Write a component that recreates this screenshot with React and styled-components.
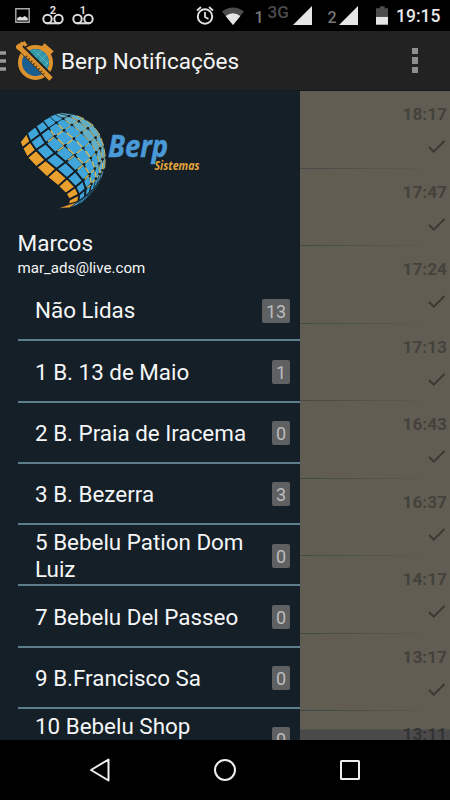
import React from 'react'
import styled, { createGlobalStyle } from 'styled-components'

const GlobalStyle = createGlobalStyle`
  * {
    box-sizing: border-box;
  }

  body {
    margin: 0;
    background: #000;
    font-family: Roboto, "Liberation Sans", sans-serif;
  }

  svg {
    display: block;
    flex-shrink: 0;
  }
`;

const Screen = styled.div`
  width: 450px;
  height: 800px;
  display: flex;
  flex-direction: column;
  overflow: hidden;
  background: #000;
`;

const StatusBar = styled.div`
  height: 31px;
  display: flex;
  align-items: center;
  justify-content: space-between;
  padding: 0 9px 0 15px;
`;

const StatusGroup = styled.div`
  display: flex;
  align-items: center;
  height: 31px;
`;

const StatusIcon = styled.svg`
  margin-right: ${props => props.$gap || 0}px;
`;

const Sim = styled.span`
  width: ${props => props.$width}px;
  padding-top: 4px;
  font-size: 16px;
  font-weight: 500;
  line-height: 18px;
  color: #777;
`;

const Network = styled.span`
  width: 25px;
  height: 24px;
  font-size: 17px;
  line-height: 17px;
  font-weight: 500;
  color: #4c4c4c;
`;

const Clock = styled.span`
  width: 45px;
  padding-top: 1px;
  font-size: 17.5px;
  font-weight: 500;
  color: #e8e8e8;
`;

const ActionBar = styled.div`
  height: 60px;
  display: flex;
  align-items: center;
  background: #222;
  border-bottom: 1px solid #17191b;
`;

const Title = styled.h1`
  flex: 1;
  margin: 1px 0 0 7px;
  font-size: 22.5px;
  font-weight: 400;
  color: #f5f5f5;
`;

const Overflow = styled.div`
  display: flex;
  flex-direction: column;
  gap: 3px;
  margin-right: 32px;
`;

const OverflowDot = styled.i`
  width: 6px;
  height: 6.5px;
  background: #8f8f8f;
`;

const Content = styled.div`
  height: 649px;
  display: flex;
  overflow: hidden;
`;

const Drawer = styled.div`
  width: 300px;
  height: 649px;
  overflow: hidden;
  background: #151f27;
`;

const Profile = styled.div`
  height: 189px;
  padding: 15px 0 0 17.5px;
  color: #f4f6f7;
`;

const LogoRow = styled.div`
  height: 124px;
`;

const Name = styled.div`
  font-size: 22.5px;
  line-height: 27px;
`;

const Email = styled.div`
  padding-top: 1px;
  font-size: 15.1px;
  line-height: 21px;
`;

const MenuItem = styled.div`
  height: 61.28px;
  margin-left: 17.5px;
  padding: 2px 10px 0 17.5px;
  display: flex;
  align-items: center;
  justify-content: space-between;
  border-bottom: 2px solid #5c7f8b;
`;

const MenuLabel = styled.span`
  width: 218px;
  font-size: 22.4px;
  line-height: 26.4px;
  color: #f4f6f7;
`;

const Badge = styled.span`
  height: 24px;
  padding: 0 3.8px;
  border-radius: 2px;
  font-size: 18px;
  line-height: 25px;
  background: #5f6062;
  color: #bcbcbc;
`;

const List = styled.div`
  flex: 1;
  height: 649px;
  overflow: hidden;
  background: linear-gradient(#625d52 638px, #4a4a4a 639px);
`;

const ListItem = styled.div`
  height: 77.5px;
  padding: 13px 3px 0 0;
  display: flex;
  flex-direction: column;
  align-items: flex-end;
  border-bottom: 1.4px solid;
  border-image: linear-gradient(90deg, ${props => props.$line}, #625d52 92%) 1;
`;

const Time = styled.span`
  font-size: 17.3px;
  font-weight: 700;
  line-height: 20px;
  color: ${props => props.$color || '#44423d'};
`;

const NavBar = styled.div`
  height: 60px;
  display: flex;
  align-items: center;
  justify-content: space-between;
  padding: 0 89px 0 88px;
`;

const menu = [
  { label: 'Não Lidas', count: 13 },
  { label: '1 B. 13 de Maio', count: 1 },
  { label: '2 B. Praia de Iracema', count: 0 },
  { label: '3 B. Bezerra', count: 3 },
  { label: '5 Bebelu Pation Dom Luiz', count: 0 },
  { label: '7 Bebelu Del Passeo', count: 0 },
  { label: '9 B.Francisco Sa', count: 0 },
  { label: '10 Bebelu Shop Benfica', count: 0 },
];

const messages = [
  { time: '18:17', line: '#47494a' },
  { time: '17:47', line: '#3c4f43' },
  { time: '17:24', line: '#3c4f43' },
  { time: '17:13', line: '#454a42' },
  { time: '16:43', line: '#3f4a42' },
  { time: '16:37', line: '#3c4f43' },
  { time: '14:17', line: '#3f4a42' },
  { time: '13:17', line: '#3b4644' },
  { time: '13:11', line: '#4a4a4a', color: '#343434' },
];

// lines of the globe grid, from the orange edge to the right side
const mesh = [
  [[28, 108], [36, 127], [50, 155], [78, 184], [110, 214], [143, 241], [166, 263], [176, 281], [172, 297], [144, 307]],
  [[49, 81], [60, 107], [77, 132], [106, 162], [138, 189], [170, 217], [195, 243], [206, 266], [204, 287], [178, 305]],
  [[75, 60], [90, 85], [106, 112], [134, 141], [166, 168], [195, 196], [218, 224], [226, 249], [223, 273], [200, 297]],
  [[98, 44], [115, 66], [133, 91], [163, 119], [193, 147], [220, 175], [237, 205], [243, 234], [238, 260], [217, 287]],
  [[118, 32], [138, 50], [160, 73], [190, 98], [218, 126], [241, 156], [253, 188], [256, 218], [250, 247], [230, 276]],
  [[134, 25], [158, 38], [184, 57], [213, 80], [239, 108], [257, 139], [266, 172], [267, 204], [259, 235], [241, 264]],
  [[145, 22], [175, 30], [205, 46], [232, 67], [255, 95], [269, 127], [276, 160], [276, 193], [267, 224], [250, 253]],
  [[152, 20], [188, 25], [220, 38], [248, 58], [268, 87], [279, 118], [284, 150], [283, 183], [274, 214], [258, 243]],
];

// point at t on the way from a to b
const mix = (a, b, t) => [a[0] + (b[0] - a[0]) * t, a[1] + (b[1] - a[1]) * t];

const cells = [];
const chevrons = [];
mesh.slice(0, -1).forEach((line, i) => {
  const next = mesh[i + 1];
  line.slice(0, -1).forEach((point, j) => {
    cells.push({
      points: [point, next[j], next[j + 1], line[j + 1]].join(' '),
      fill: i === 0 ? '#eaa02e' : i > 4 ? '#62afca' : '#3fa5da',
      width: i > 3 || j > 7 ? 1.5 : i > 2 ? 3 : 5.5,
    });
    if (i > 1 && j > 0 && j < 7) {
      chevrons.push({
        points: [mix(next[j + 1], next[j], 0.7), next[j + 1], mix(next[j + 1], line[j + 1], 0.75)].join(' '),
        width: i > 3 ? 3 : 4.5,
      });
    }
  });
});

const Logo = () => (
  <svg width="200" height="110" viewBox="0 0 200 110">
    <g transform="translate(-7.5 0) scale(.3333)">
      {cells.map(cell => (
        <polygon
          key={cell.points}
          points={cell.points}
          fill={cell.fill}
          stroke="#151f27"
          strokeWidth={cell.width}
        />
      ))}
      {chevrons.map(chevron => (
        <polyline
          key={chevron.points}
          points={chevron.points}
          fill="none"
          stroke="#c9b968"
          strokeWidth={chevron.width}
        />
      ))}
      <g fill="#151f27">
        {mesh.slice(3, 7).flatMap(line => line.slice(1, 8)).map(point => (
          <circle key={point.join()} cx={point[0]} cy={point[1]} r="4" />
        ))}
      </g>
    </g>
    <g fontFamily="'Open Sans', sans-serif" fontStyle="italic">
      <text x="90" y="51" fontSize="30" fontWeight="700" fill="#4a9ad8" stroke="#4a9ad8" strokeWidth=".5" textLength="60" lengthAdjust="spacingAndGlyphs">Berp</text>
      <text x="136.5" y="63.500" fontSize="12" fontWeight="700" fill="#e3a53c" textLength="45" lengthAdjust="spacingAndGlyphs">Sistemas</text>
    </g>
  </svg>
);

const AppIcon = () => (
  <svg width="38" height="40" viewBox="0 0 38 40">
    <path d="M27 4l9 8M3 7l7-5" stroke="#dc922d" strokeWidth="5" />
    <path d="M28 10l3-4" stroke="#dc922d" strokeWidth="3" />
    <circle cx="19.5" cy="21.5" r="15.5" fill="#1b5f92" stroke="#dc922d" strokeWidth="4" />
    <path d="M10 12a13.500 13.500 0 0 1 20 18z" fill="#3298a8" />
    <path d="M13 12l17 16M18 9l14 14M17 18l9-9M22 22l9-9M27 26l6-6" stroke="#71bcc0" strokeWidth="1" strokeDasharray="2 1" />
    <path d="M1 3l35 35" stroke="#222" strokeWidth="7.5" />
    <path d="M1 4l34 34" stroke="#dc922d" strokeWidth="5" />
    <path d="M10 15l18 18" stroke="#513c20" strokeWidth="2" strokeDasharray="1.5 2" />
    <path d="M1 8l6-6" stroke="#dc922d" strokeWidth="4" />
  </svg>
);

const Voicemail = ({ number, gap }) => (
  <StatusIcon $gap={gap} width="22" height="20" viewBox="0 0 22 20">
    <text x="11" y="8" textAnchor="middle" fontSize="11" fontWeight="700" fill="#ddd">{number}</text>
    <g fill="none" stroke="#ddd" strokeWidth="2">
      <circle cx="5.5" cy="13" r="4.2" />
      <circle cx="16.5" cy="13" r="4.2" />
      <path d="M5 17.3h12" />
    </g>
  </StatusIcon>
);

const Signal = ({ gap }) => (
  <StatusIcon $gap={gap} width="19" height="19" viewBox="0 0 19 19">
    <path d="M0 19L19 0v19z" fill="#e6e6e6" />
  </StatusIcon>
);

const Alarm = () => (
  <StatusIcon $gap={8} width="18" height="19" viewBox="0 0 18 19" fill="none" stroke="#e0e0e0" strokeWidth="2">
    <circle cx="9" cy="10.5" r="7.2" />
    <path d="M9 6v5l3.500 2M1 4.500L5 1M17 4.500L13 1" strokeWidth="1.8" />
  </StatusIcon>
);

const App = () => {
  return (
    <>
      <GlobalStyle />
      <Screen>
        <StatusBar>
          <StatusGroup>
            <StatusIcon $gap={12} width="15" height="15" viewBox="0 0 15 15">
              <path d="M.8.8h13.400v13.400H.8z" fill="none" stroke="#aaa" strokeWidth="1.4" />
              <path d="M2.200 12.500V10l3-1.500 2 1 2.500-1.500 3 2v2.500z" fill="#ddd" />
            </StatusIcon>
            <Voicemail number="2" gap={8} />
            <Voicemail number="1" />
          </StatusGroup>
          <StatusGroup>
            <Alarm />
            <StatusIcon $gap={11} width="22" height="18" viewBox="0 0 22 18">
              <path d="M0 4.500Q11-3.500 22 4.500L11 18z" fill="#4c4c4c" />
              <path d="M3.600 9Q11 3.500 18.400 9L11 18z" fill="#e6e6e6" />
            </StatusIcon>
            <Sim $width={13}>1</Sim>
            <Network>3G</Network>
            <Signal gap={16} />
            <Sim $width={11}>2</Sim>
            <Signal gap={18} />
            <StatusIcon $gap={8} width="12.500" height="19" viewBox="0 0 13 19">
              <path d="M0 2h4V0h5v2h4v17H0z" fill="#4c4c4c" />
              <path d="M0 11h13v8H0z" fill="#e6e6e6" />
            </StatusIcon>
            <Clock>19:15</Clock>
          </StatusGroup>
        </StatusBar>

        <ActionBar>
          <svg width="16" height="20" viewBox="0 0 16 20">
            <path d="M0 2h6M0 10h6M0 18h6" stroke="#999" strokeWidth="3.4" />
          </svg>
          <AppIcon />
          <Title>Berp Notificações</Title>
          <Overflow>
            <OverflowDot />
            <OverflowDot />
            <OverflowDot />
          </Overflow>
        </ActionBar>

        <Content>
          <Drawer>
            <Profile>
              <LogoRow>
                <Logo />
              </LogoRow>
              <Name>Marcos</Name>
              <Email>mar_ads@live.com</Email>
            </Profile>
            {menu.map(item => (
              <MenuItem key={item.label}>
                <MenuLabel>{item.label}</MenuLabel>
                <Badge>{item.count}</Badge>
              </MenuItem>
            ))}
          </Drawer>
          <List>
            {messages.map(message => (
              <ListItem key={message.time} $line={message.line}>
                <Time $color={message.color}>{message.time}</Time>
                <svg width="20" height="38" viewBox="0 0 20 38">
                  <path d="M2 23l4.700 4.700L17.500 17" fill="none" stroke="#3b3935" strokeWidth="2" />
                </svg>
              </ListItem>
            ))}
          </List>
        </Content>

        <NavBar>
          <svg width="23" height="26" viewBox="0 0 23 26">
            <path d="M3 13L20.500 2.500v21z" fill="none" stroke="#eee" strokeWidth="2" strokeLinejoin="round" />
          </svg>
          <svg width="24" height="24" viewBox="0 0 24 24">
            <circle cx="12" cy="12" r="10" fill="none" stroke="#eee" strokeWidth="2" />
          </svg>
          <svg width="22" height="22" viewBox="0 0 22 22">
            <rect x="2" y="2" width="18" height="18" rx=".5" fill="none" stroke="#eee" strokeWidth="2" />
          </svg>
        </NavBar>
      </Screen>
    </>
  )
}

export default App;
